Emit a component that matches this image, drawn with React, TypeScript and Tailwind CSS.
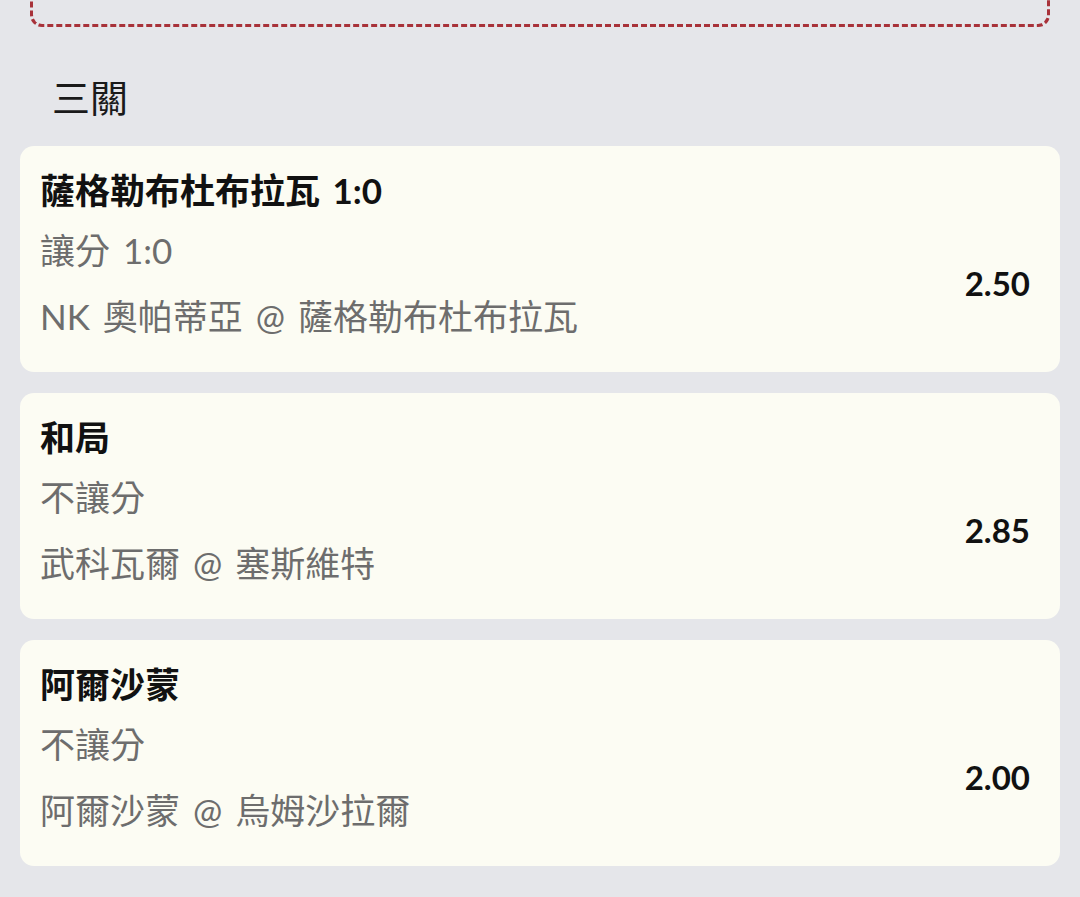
import React from "react";

interface Leg {
  pick: string;
  line: string;
  match: string;
  odds: string;
}

const legs: Leg[] = [
  { pick: "薩格勒布杜布拉瓦 1:0", line: "讓分 1:0", match: "NK 奧帕蒂亞 @ 薩格勒布杜布拉瓦", odds: "2.50" },
  { pick: "和局", line: "不讓分", match: "武科瓦爾 @ 塞斯維特", odds: "2.85" },
  { pick: "阿爾沙蒙", line: "不讓分", match: "阿爾沙蒙 @ 烏姆沙拉爾", odds: "2.00" },
];

function LegCard({ leg }: { leg: Leg }) {
  return (
    <div className="flex rounded-[14px] bg-[#fcfcf3] pl-[20px] pr-[30px] pt-[20px] pb-[32px]">
      <div className="flex flex-col text-[35px] [word-spacing:4px]">
        <div className="leading-[48px] font-bold text-[#111111] whitespace-nowrap">{leg.pick}</div>
        <div className="mt-[12px] leading-[48px] text-[#6d6d6d] whitespace-nowrap">{leg.line}</div>
        <div className="mt-[18px] leading-[48px] text-[#6d6d6d] whitespace-nowrap">{leg.match}</div>
      </div>
      <div className="ml-auto flex items-center pt-[62px] text-[33px] font-bold text-[#111111]">
        {leg.odds}
      </div>
    </div>
  );
}

export default function App() {
  return (
    <div
      className="min-h-screen overflow-hidden bg-[#e5e6ea]"
      style={{ fontFamily: 'Lato, "Noto Sans CJK TC", sans-serif' }}
    >
      <div className="mx-[30px] mt-[-60px] h-[87px] rounded-[12px] border-[3px] border-dashed border-[#a8323a]" />

      <h2 className="pl-[52px] pt-[46px] text-[38px] leading-[48px] font-normal text-[#1a1a1a]">三關</h2>

      <div className="flex flex-col gap-[21px] px-[20px] pt-[25px] pb-[30px]">
        {legs.map((leg, i) => (
          <LegCard key={i} leg={leg} />
        ))}
      </div>
    </div>
  );
}
